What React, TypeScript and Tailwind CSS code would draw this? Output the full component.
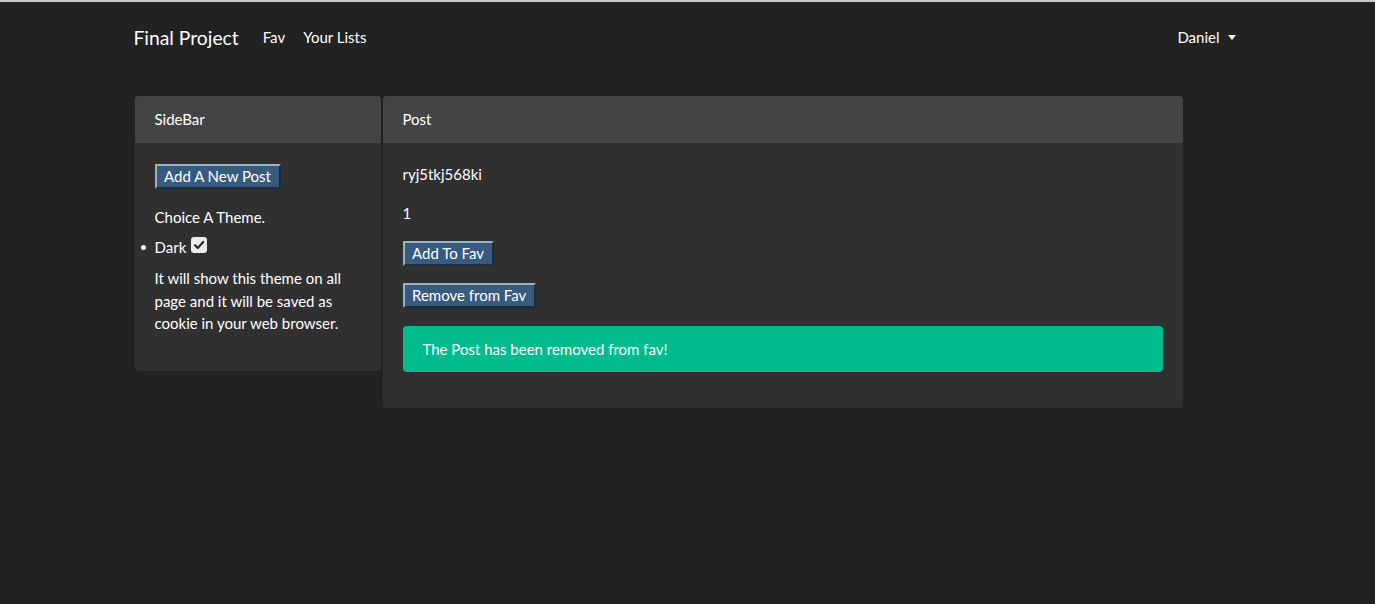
import React from 'react';

const font = { fontFamily: 'Lato, "Open Sans", sans-serif' };

const Button: React.FC<{ label: string }> = ({ label }) => (
  <button className="block bg-[#375a7f] text-white text-[15px] leading-[21px] px-[7.5px] border-2 border-t-[#9fb0c2] border-l-[#9fb0c2] border-b-[#1c2d40] border-r-[#1c2d40]">
    {label}
  </button>
);

const Card: React.FC<{ title: string; className?: string; children: React.ReactNode }> = ({ title, className, children }) => (
  <div className={`bg-[#303030] rounded-[4px] overflow-hidden ${className ?? ''}`}>
    <div className="bg-[#444444] px-5 py-3 leading-[22px] h-[47px]">{title}</div>
    <div className="px-5 pt-5 pb-[36px]">{children}</div>
  </div>
);

const App: React.FC = () => {
  return (
    <div className="min-h-screen bg-[#222222] text-white text-[15px] leading-[22.5px] border-t-2 border-[#c9c9c9]" style={font}>
      <div className="w-[1110px] mx-auto">
        {/* Navbar */}
        <nav className="h-[71px] flex items-center justify-between">
          <div className="flex items-center">
            <span className="text-[19.3px] leading-[30px] pl-[1px] mr-4">Final Project</span>
            <a className="px-2">Fav</a>
            <a className="px-2 ml-[2px]">Your Lists</a>
          </div>
          <div className="flex items-center px-2 mr-[-1px]">
            <span>Daniel</span>
            <span className="ml-[8px] w-0 h-0 border-l-[4.5px] border-r-[4.5px] border-t-[5px] border-l-transparent border-r-transparent border-t-white" />
          </div>
        </nav>

        {/* Content */}
        <div className="mt-[23px] pl-[2px] flex items-start gap-[2px]">
          <Card title="SideBar" className="w-[246px]">
            <div className="pt-[1px] mb-[17px]">
              <Button label="Add A New Post" />
            </div>
            <p className="mb-[7px]">Choice A Theme.</p>
            <ul className="mb-[9px]">
              <li className="flex items-center relative">
                <span className="absolute left-[-14px] top-[9px] w-[5px] h-[5px] rounded-full bg-white" />
                <span>Dark</span>
                <span className="ml-[5px] mt-[-3px] w-4 h-4 rounded-[3px] bg-[#ececec] flex items-center justify-center">
                  <svg width="12" height="12" viewBox="0 0 12 12">
                    <path d="M2 6.2 L4.8 9 L10.2 3" fill="none" stroke="#2a2a2a" strokeWidth="2.2" strokeLinecap="round" strokeLinejoin="round" />
                  </svg>
                </span>
              </li>
            </ul>
            <p>It will show this theme on all page and it will be saved as cookie in your web browser.</p>
          </Card>

          <Card title="Post" className="w-[800px]">
            <p className="mb-[16px]">ryj5tkj568ki</p>
            <p className="mb-[17px]">1</p>
            <div className="mb-[17px]">
              <Button label="Add To Fav" />
            </div>
            <div className="mb-[18px]">
              <Button label="Remove from Fav" />
            </div>
            <div className="bg-[#00bc8c] rounded-[4px] px-5 py-[11px] leading-[24px]">
              The Post has been removed from fav!
            </div>
          </Card>
        </div>
      </div>
    </div>
  );
};

export default App;
